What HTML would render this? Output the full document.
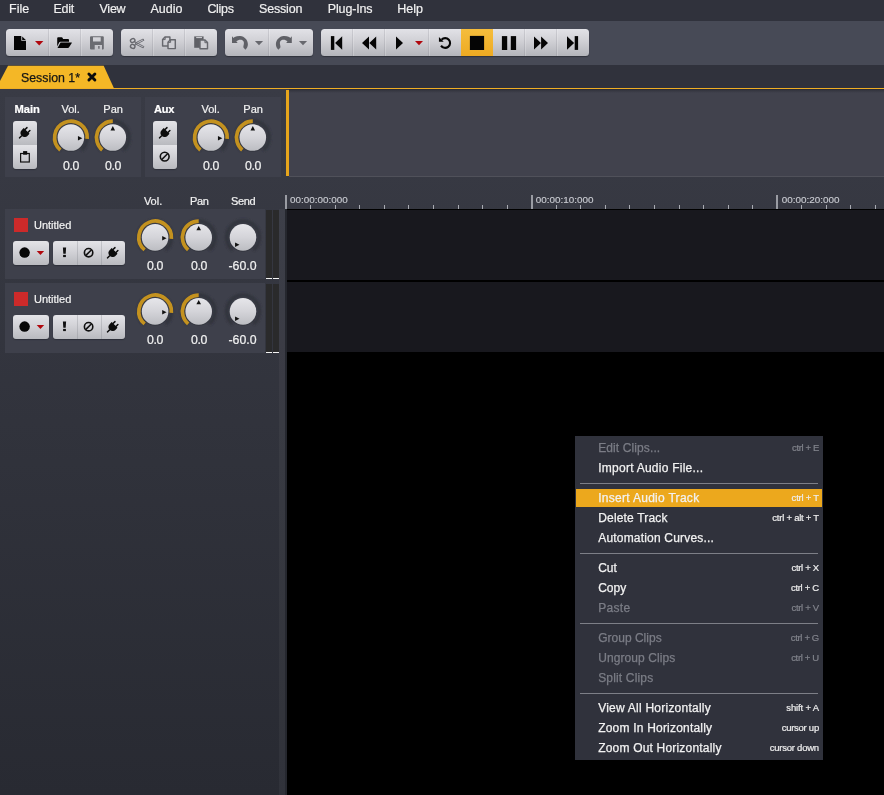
<!DOCTYPE html>
<html>
<head>
<meta charset="utf-8">
<title>Session 1</title>
<style>
*{margin:0;padding:0;box-sizing:border-box;}
html,body{width:884px;height:795px;overflow:hidden;background:#30323c;}
body{position:relative;font-family:"Liberation Sans",sans-serif;font-size:12.5px;color:#f0f0f0;-webkit-font-smoothing:antialiased;}
.abs{position:absolute;}
.t{position:absolute;white-space:nowrap;line-height:1;}
#menubar{left:0;top:0;width:884px;height:21px;background:#30323c;-webkit-text-stroke:0.2px;}
#toolbar{left:0;top:21px;width:884px;height:44px;background:#474a56;}
#tabstrip{left:0;top:65px;width:884px;height:24px;background:#30323c;}
#tabline{left:0;top:87.8px;width:884px;height:1.15px;background:#efae24;}
.grp{position:absolute;top:29.2px;height:27.3px;border-radius:3.5px;background:linear-gradient(#e2e2e7 0%,#d0d0d5 45%,#b4b5bb 100%);box-shadow:0 1px 1px rgba(30,32,40,.55);overflow:hidden;}
.grp .sep{position:absolute;top:0;width:1px;height:100%;background:rgba(120,122,130,.2);box-shadow:1px 0 0 rgba(255,255,255,.2);}
.grp svg{position:absolute;}
.on{position:absolute;top:0;height:100%;background:linear-gradient(#f5bd3c,#eeaa22);}
.sbtn{position:absolute;border-radius:3px;background:linear-gradient(#e4e4e8 0%,#d2d2d7 45%,#b9babf 100%);box-shadow:0 1px 1px rgba(30,32,40,.5);overflow:hidden;}
.sbtn .sep{position:absolute;background:rgba(120,122,130,.28);}
.sbtn svg{position:absolute;}
.panel{position:absolute;background:#3e404b;}
.knob{position:absolute;width:40px;height:40px;}
.lbl{color:#f2f2f2;-webkit-text-stroke:0.2px;}
/* context menu */
#ctx{left:575px;top:436px;width:248px;height:324px;background:#30323c;}
#ctx .it{position:absolute;left:1px;width:246px;height:18px;}
#ctx .it .n{position:absolute;left:22.2px;-webkit-text-stroke:0.25px;top:2.75px;font-size:12px;line-height:1;white-space:nowrap;color:#f2f2f2;}
#ctx .it .k{position:absolute;right:3.1px;-webkit-text-stroke:0.2px;top:4.1px;font-size:9.5px;line-height:1;white-space:nowrap;color:#eeeeee;}
#ctx .it.d .n{color:#7b7d86;}
#ctx .it.d .k{color:#82848c;}
#ctx .it.h{background:#eca81d;}
#ctx .sp{position:absolute;left:5px;width:238px;height:1px;background:#7d7f87;}
</style>
</head>
<body>
<div id="root" style="position:absolute;left:0;top:0;width:884px;height:795px;will-change:transform;">
<!-- menubar -->
<div id="menubar" class="abs">
  <span class="t" style="left:9px;top:2.5px;font-size:12.5px;">File</span>
  <span class="t" style="left:53.4px;top:2.5px;font-size:12.5px;letter-spacing:-0.25px;">Edit</span>
  <span class="t" style="left:99.5px;top:2.5px;font-size:12.5px;letter-spacing:-0.25px;">View</span>
  <span class="t" style="left:150.5px;top:2.5px;font-size:12.5px;">Audio</span>
  <span class="t" style="left:207.4px;top:2.5px;font-size:12.5px;letter-spacing:-0.3px;">Clips</span>
  <span class="t" style="left:259px;top:2.5px;font-size:12.5px;letter-spacing:-0.18px;">Session</span>
  <span class="t" style="left:327.8px;top:2.5px;font-size:12.5px;letter-spacing:-0.15px;">Plug-Ins</span>
  <span class="t" style="left:397.2px;top:2.5px;font-size:12.5px;">Help</span>
</div>
<div id="toolbar" class="abs"></div>
<div id="tabstrip" class="abs"></div>

<!-- toolbar groups -->
<div class="grp" style="left:5.5px;width:107.2px;" id="g1">
  <div class="sep" style="left:42.6px;"></div><div class="sep" style="left:74.6px;"></div>
</div>
<div class="grp" style="left:121.4px;width:95.3px;" id="g2">
  <div class="sep" style="left:30.7px;"></div><div class="sep" style="left:62.9px;"></div>
</div>
<div class="grp" style="left:225.4px;width:87.3px;" id="g3">
  <div class="sep" style="left:42.7px;"></div>
</div>
<div class="grp" style="left:321.4px;width:267.3px;" id="g4">
  <div class="on" style="left:139.6px;width:32px;"></div>
  <div class="sep" style="left:30.8px;"></div><div class="sep" style="left:62.6px;"></div><div class="sep" style="left:106.9px;"></div>
  <div class="sep" style="left:202.7px;"></div><div class="sep" style="left:234.7px;"></div>
</div>

<!-- tab -->
<svg class="abs" style="left:0;top:65px;" width="130" height="24" viewBox="0 0 130 24">
  <polygon points="-4.2,24 8,0.8 103.7,0.8 114.3,24" fill="#f4b726"/>
</svg>
<span class="t" style="left:21px;top:71.5px;font-size:12.35px;color:#151515;-webkit-text-stroke:0.25px;">Session 1*</span>
<div id="tabline" class="abs"></div>

<!-- left region bg -->
<div class="abs" style="left:0;top:89px;width:884px;height:706px;background:linear-gradient(rgb(57,59,69),rgb(40,42,50));"></div>
<!-- right upper area -->
<div class="abs" style="left:289px;top:90px;width:595px;height:86px;background:#41424d;"></div>
<div class="abs" style="left:289px;top:176px;width:595px;height:1px;background:#50515a;"></div>
<div class="abs" style="left:289px;top:89px;width:595px;height:3.5px;background:linear-gradient(rgba(30,32,40,.55),rgba(30,32,40,0));"></div>
<div class="abs" style="left:285.5px;top:89.5px;width:3.5px;height:86.5px;background:#e6a51c;"></div>

<!-- main / aux panels -->
<div class="panel" style="left:5px;top:97px;width:136px;height:80px;"></div>
<div class="panel" style="left:145px;top:97px;width:136px;height:80px;"></div>

<!-- track panels -->
<div class="panel" style="left:5px;top:209px;width:260px;height:70px;"></div>
<div class="panel" style="left:5px;top:283px;width:260px;height:70px;"></div>

<!-- timeline -->
<div class="abs" style="left:286px;top:209px;width:598px;height:586px;background:#000;"></div>
<div class="abs" style="left:287px;top:210px;width:597px;height:70px;background:#18181e;"></div>
<div class="abs" style="left:287px;top:282px;width:597px;height:70px;background:#18181e;"></div>
<div class="abs" style="left:279px;top:209px;width:6.4px;height:586px;background:rgba(255,255,255,.04);"></div>
<div class="abs" style="left:285.3px;top:209px;width:1.6px;height:586px;background:#25272e;"></div>


<!-- small button stacks -->
<div class="sbtn" style="left:13px;top:121px;width:24px;height:48px;background:linear-gradient(#e4e4e8 0%,#d2d2d7 22%,#b9babf 50%,#e4e4e8 50%,#d2d2d7 72%,#b9babf 100%);"></div>
<div class="sbtn" style="left:153px;top:121px;width:24px;height:48px;background:linear-gradient(#e4e4e8 0%,#d2d2d7 22%,#b9babf 50%,#e4e4e8 50%,#d2d2d7 72%,#b9babf 100%);"></div>
<!-- track buttons -->
<div class="sbtn" style="left:13px;top:241px;width:36px;height:24px;"></div>
<div class="sbtn" style="left:53px;top:241px;width:72px;height:24px;"><div class="sep" style="left:24px;top:0;width:1px;height:24px;"></div><div class="sep" style="left:48px;top:0;width:1px;height:24px;"></div></div>
<div class="sbtn" style="left:13px;top:315px;width:36px;height:24px;"></div>
<div class="sbtn" style="left:53px;top:315px;width:72px;height:24px;"><div class="sep" style="left:24px;top:0;width:1px;height:24px;"></div><div class="sep" style="left:48px;top:0;width:1px;height:24px;"></div></div>

<!-- labels main/aux -->
<span class="t lbl" style="left:14.4px;top:103.5px;font-size:11.2px;font-weight:bold;color:#fff;">Main</span>
<span class="t lbl" style="left:61.5px;top:104px;font-size:11px;">Vol.</span>
<span class="t lbl" style="left:103.3px;top:104px;font-size:11px;">Pan</span>
<span class="t lbl" style="left:62.9px;top:160px;font-size:12.3px;letter-spacing:-0.3px;">0.0</span>
<span class="t lbl" style="left:104.9px;top:160px;font-size:12.3px;letter-spacing:-0.3px;">0.0</span>
<span class="t lbl" style="left:154px;top:103.5px;font-size:11px;font-weight:bold;letter-spacing:-0.2px;color:#fff;">Aux</span>
<span class="t lbl" style="left:201.5px;top:104px;font-size:11px;">Vol.</span>
<span class="t lbl" style="left:243.3px;top:104px;font-size:11px;">Pan</span>
<span class="t lbl" style="left:202.9px;top:160px;font-size:12.3px;letter-spacing:-0.3px;">0.0</span>
<span class="t lbl" style="left:244.9px;top:160px;font-size:12.3px;letter-spacing:-0.3px;">0.0</span>

<!-- track column labels -->
<span class="t lbl" style="left:143.9px;top:196px;font-size:11px;">Vol.</span>
<span class="t lbl" style="left:190px;top:196px;font-size:11px;letter-spacing:-0.3px;">Pan</span>
<span class="t lbl" style="left:231px;top:196px;font-size:11px;letter-spacing:-0.35px;">Send</span>

<!-- track 1 -->
<span class="t lbl" style="left:34px;top:219.5px;font-size:11px;">Untitled</span>
<span class="t lbl" style="left:146.9px;top:260px;font-size:12.3px;letter-spacing:-0.3px;">0.0</span>
<span class="t lbl" style="left:190.9px;top:260px;font-size:12.3px;letter-spacing:-0.3px;">0.0</span>
<span class="t lbl" style="left:228.5px;top:260px;font-size:12.3px;">-60.0</span>
<!-- track 2 -->
<span class="t lbl" style="left:34px;top:293.5px;font-size:11px;">Untitled</span>
<span class="t lbl" style="left:146.9px;top:334px;font-size:12.3px;letter-spacing:-0.3px;">0.0</span>
<span class="t lbl" style="left:190.9px;top:334px;font-size:12.3px;letter-spacing:-0.3px;">0.0</span>
<span class="t lbl" style="left:228.5px;top:334px;font-size:12.3px;">-60.0</span>

<!-- meters -->
<div class="abs" style="left:266px;top:209.5px;width:6px;height:69.5px;background:#2a2a2b;"></div>
<div class="abs" style="left:273px;top:209.5px;width:6px;height:69.5px;background:#2a2a2b;"></div>
<div class="abs" style="left:266px;top:277.7px;width:6px;height:1.4px;background:#f4f4f4;"></div>
<div class="abs" style="left:273px;top:277.7px;width:6px;height:1.4px;background:#f4f4f4;"></div>
<div class="abs" style="left:266px;top:284px;width:6px;height:69px;background:#2a2a2b;"></div>
<div class="abs" style="left:273px;top:284px;width:6px;height:69px;background:#2a2a2b;"></div>
<div class="abs" style="left:266px;top:351.8px;width:6px;height:1.4px;background:#f4f4f4;"></div>
<div class="abs" style="left:273px;top:351.8px;width:6px;height:1.4px;background:#f4f4f4;"></div>

<!-- ruler -->
<div class="abs" style="left:310px;top:204.8px;width:1px;height:4.2px;background:#a9abb2;"></div>
<div class="abs" style="left:335px;top:204.8px;width:1px;height:4.2px;background:#a9abb2;"></div>
<div class="abs" style="left:359px;top:204.8px;width:1px;height:4.2px;background:#a9abb2;"></div>
<div class="abs" style="left:384px;top:204.8px;width:1px;height:4.2px;background:#a9abb2;"></div>
<div class="abs" style="left:408px;top:204.8px;width:1px;height:4.2px;background:#a9abb2;"></div>
<div class="abs" style="left:433px;top:204.8px;width:1px;height:4.2px;background:#a9abb2;"></div>
<div class="abs" style="left:458px;top:204.8px;width:1px;height:4.2px;background:#a9abb2;"></div>
<div class="abs" style="left:482px;top:204.8px;width:1px;height:4.2px;background:#a9abb2;"></div>
<div class="abs" style="left:507px;top:204.8px;width:1px;height:4.2px;background:#a9abb2;"></div>
<div class="abs" style="left:556px;top:204.8px;width:1px;height:4.2px;background:#a9abb2;"></div>
<div class="abs" style="left:580px;top:204.8px;width:1px;height:4.2px;background:#a9abb2;"></div>
<div class="abs" style="left:605px;top:204.8px;width:1px;height:4.2px;background:#a9abb2;"></div>
<div class="abs" style="left:629px;top:204.8px;width:1px;height:4.2px;background:#a9abb2;"></div>
<div class="abs" style="left:654px;top:204.8px;width:1px;height:4.2px;background:#a9abb2;"></div>
<div class="abs" style="left:679px;top:204.8px;width:1px;height:4.2px;background:#a9abb2;"></div>
<div class="abs" style="left:703px;top:204.8px;width:1px;height:4.2px;background:#a9abb2;"></div>
<div class="abs" style="left:728px;top:204.8px;width:1px;height:4.2px;background:#a9abb2;"></div>
<div class="abs" style="left:752px;top:204.8px;width:1px;height:4.2px;background:#a9abb2;"></div>
<div class="abs" style="left:801px;top:204.8px;width:1px;height:4.2px;background:#a9abb2;"></div>
<div class="abs" style="left:826px;top:204.8px;width:1px;height:4.2px;background:#a9abb2;"></div>
<div class="abs" style="left:850px;top:204.8px;width:1px;height:4.2px;background:#a9abb2;"></div>
<div class="abs" style="left:875px;top:204.8px;width:1px;height:4.2px;background:#a9abb2;"></div>
<div class="abs" style="left:285.4px;top:195px;width:1.8px;height:14px;background:#9a9ca3;"></div>
<div class="abs" style="left:530.9px;top:195px;width:1.8px;height:14px;background:#9a9ca3;"></div>
<div class="abs" style="left:776.4px;top:195px;width:1.8px;height:14px;background:#9a9ca3;"></div>
<span class="t" style="left:290px;top:195.4px;font-size:9.9px;color:#c8cad0;-webkit-text-stroke:0.15px;">00:00:00:000</span>
<span class="t" style="left:535.8px;top:195.4px;font-size:9.9px;color:#c8cad0;-webkit-text-stroke:0.15px;">00:00:10:000</span>
<span class="t" style="left:781.8px;top:195.4px;font-size:9.9px;color:#c8cad0;-webkit-text-stroke:0.15px;">00:00:20:000</span>

<svg class="abs" style="left:0;top:0;" width="884" height="795" viewBox="0 0 884 795">
<defs>
<linearGradient id="kg" x1="0" y1="0" x2="0" y2="1"><stop offset="0" stop-color="#e6e6ea"/><stop offset=".5" stop-color="#d4d4d9"/><stop offset="1" stop-color="#bcbdc2"/></linearGradient>
<filter id="bl" x="-20%" y="-20%" width="140%" height="140%"><feGaussianBlur stdDeviation="0.7"/></filter>
<filter id="bl2" x="-20%" y="-20%" width="140%" height="140%"><feGaussianBlur stdDeviation="0.8"/></filter>
<g id="plug" fill="#0c0c0c">
<rect x="-2.8" y="-7" width="1.5" height="4.2" rx=".7"/>
<rect x="1.3" y="-7" width="1.5" height="4.2" rx=".7"/>
<path d="M-4.1,-3.7 H4.1 V-1 C4.1,1.8 2.3,3.3 0,3.3 C-2.3,3.3 -4.1,1.8 -4.1,-1 Z"/>
<rect x="-.72" y="2.8" width="1.44" height="4.2" rx=".5"/>
</g>
</defs>
<path d="M14,36 H21.3 V40.8 H26 V50 H14 Z" fill="#050505"/>
<path d="M22.2,36.6 L25.8,40.1 H22.2 Z" fill="#050505"/>
<path d="M35,41.1 H43.4 L39.2,45.4 Z" fill="#b0080e"/>
<path d="M57.2,38.2 Q57.2,37.2 58.2,37.2 H61.6 Q62.4,37.2 62.7,38 L63,38.9 H68 Q69,38.9 69,39.9 V41.7 H60.3 Q59.6,41.7 59.3,42.3 L57.2,46.4 Z" fill="#050505"/>
<path d="M60.6,42.6 H71.6 Q72.1,42.6 71.8,43.1 L68.9,47.5 Q68.6,47.9 68,47.9 H57.5 Z" fill="#050505"/>
<path d="M91,36.2 H102.8 Q103.8,36.2 103.8,37.2 V48.6 Q103.8,49.6 102.8,49.6 H91 Q90,49.6 90,48.6 V37.2 Q90,36.2 91,36.2 Z M93,37.2 V41.5 H100.7 V37.2 Z M94.7,45 V49.6 H102 V45 Z M98.2,46 V48.8 H99.6 V46 Z" fill="#6b6c72" fill-rule="evenodd"/>
<ellipse cx="132.7" cy="40.5" rx="2.3" ry="1.9" fill="none" stroke="#67686e" stroke-width="1.4" transform="rotate(-25 132.7 40.5)"/>
<ellipse cx="132.7" cy="46.4" rx="2.3" ry="1.9" fill="none" stroke="#67686e" stroke-width="1.4" transform="rotate(25 132.7 46.4)"/>
<path d="M134.6,41.6 L143.9,46.6 L143.2,47.9 L136.5,44.6 Z" fill="none" stroke="#67686e" stroke-width="0.9" stroke-linejoin="round"/>
<path d="M134.6,45.3 L143.9,40.3 L143.2,39 L136.5,42.3 Z" fill="none" stroke="#67686e" stroke-width="0.9" stroke-linejoin="round"/>
<path d="M165,36.9 H169.9 V46 H162.6 V39.4 Z" fill="none" stroke="#67686e" stroke-width="1.45" stroke-linejoin="round"/>
<path d="M162.6,39.6 H165.2 V36.9" fill="none" stroke="#67686e" stroke-width="1"/>
<path d="M170.4,39.7 H175.3 V48.6 H168 V42.2 Z" fill="#cfcfd4" stroke="#67686e" stroke-width="1.45" stroke-linejoin="round"/>
<path d="M168,42.4 H170.6 V39.7" fill="none" stroke="#67686e" stroke-width="1"/>
<rect x="194.2" y="36.4" width="9.4" height="11.4" fill="#5f6066"/>
<rect x="196.2" y="37.1" width="5.8" height="1" fill="#d8d8dc"/>
<path d="M200,39.9 H205 L207.5,42.6 V48.8 H200 Z" fill="#cfcfd4" stroke="#67686e" stroke-width="1.45" stroke-linejoin="round"/>
<path d="M204.9,39.9 V42.7 H207.5" fill="none" stroke="#67686e" stroke-width="1"/>
<path d="M232,36.3 V42.9 H237.7 L236.3,41.4 C238,39.6 240.5,39.3 242,40 C243.6,40.9 244,42.2 243.9,43.5 C243.8,45 243.2,46.3 243.4,47.4 L245.4,49.7 C247,48.3 247.9,46.2 247.9,44.2 C247.9,40 244.5,36.4 240.2,36 C238.3,35.9 236.3,36.2 234.6,36.9 L233.5,38 Z" fill="#5f6066"/>
<path d="M232,36.3 V42.9 H237.7 L236.3,41.4 C238,39.6 240.5,39.3 242,40 C243.6,40.9 244,42.2 243.9,43.5 C243.8,45 243.2,46.3 243.4,47.4 L245.4,49.7 C247,48.3 247.9,46.2 247.9,44.2 C247.9,40 244.5,36.4 240.2,36 C238.3,35.9 236.3,36.2 234.6,36.9 L233.5,38 Z" fill="#5f6066" transform="translate(523.8,0) scale(-1,1)"/>
<path d="M254.9,41.1 H263.1 L259,45.2 Z" fill="#67686e"/>
<path d="M298.9,41.1 H307.1 L303,45.2 Z" fill="#67686e"/>
<rect x="330.9" y="36.1" width="3.4" height="13.8" fill="#050505"/><path d="M335.1,43 L342.2,36.3 V49.7 Z" fill="#050505"/>
<path d="M362,43 L369,36.6 V49.4 Z M369.3,43 L376.2,36.6 V49.4 Z" fill="#050505"/>
<path d="M396,36.5 L403,43 L396,49.5 Z" fill="#050505"/>
<path d="M415,41.1 H423 L419,45.3 Z" fill="#b0080e"/>
<path d="M441.56,39.72 A4.9,4.9 0 1 1 441.04,45.60" fill="none" stroke="#050505" stroke-width="2.1"/>
<path d="M438.95,37.1 V41.85 H443.7 Z" fill="#050505"/>
<rect x="469.9" y="35.9" width="14.2" height="14.1" fill="#050505"/>
<rect x="501.9" y="36.1" width="5.3" height="13.9" fill="#050505"/><rect x="510.8" y="36.1" width="5.3" height="13.9" fill="#050505"/>
<path d="M534,36.6 L541,43 L534,49.4 Z M541.1,36.6 L548,43 L541.1,49.4 Z" fill="#050505"/>
<path d="M567,36.3 L574.1,43 L567,49.7 Z" fill="#050505"/><rect x="574.7" y="36.1" width="3.4" height="13.8" fill="#050505"/>
<path d="M88.9,74 L94.9,80 M94.9,74 L88.9,80" stroke="#0c0c0c" stroke-width="2.9" stroke-linecap="round"/>
<use href="#plug" transform="translate(24.0,133.5) rotate(45)"/>
<use href="#plug" transform="translate(164.0,133.5) rotate(45)"/>
<rect x="20.6" y="153.5" width="8.7" height="8.5" fill="none" stroke="#111" stroke-width="1.2"/><rect x="23.1" y="151.1" width="4.1" height="3.6" fill="#0c0c0c"/>
<circle cx="164.7" cy="156.6" r="4.4" fill="none" stroke="#111" stroke-width="1.6"/><path d="M161.59,159.71 L167.81,153.49" stroke="#111" stroke-width="1.6"/>
<path d="M60.42,149.99 A16.3,16.3 0 1 1 81.38,149.99" fill="none" stroke="#32343d" stroke-width="3.8" filter="url(#bl2)"/>
<path d="M60.42,149.99 A16.3,16.3 0 1 1 87.14,138.92" fill="none" stroke="#c4921f" stroke-width="3.7"/>
<circle cx="70.9" cy="138.1" r="13.9" fill="#2e3039" opacity=".55" filter="url(#bl)"/>
<circle cx="70.9" cy="137.5" r="13.3" fill="url(#kg)"/>
<path d="M-2.2,-2.3 L2.2,0 L-2.2,2.3 Z" fill="#111" transform="translate(80.16,138.31) rotate(0)"/>
<path d="M102.32,149.99 A16.3,16.3 0 1 1 123.28,149.99" fill="none" stroke="#32343d" stroke-width="3.8" filter="url(#bl2)"/>
<path d="M102.32,149.99 A16.3,16.3 0 0 1 112.80,121.20" fill="none" stroke="#c4921f" stroke-width="3.7"/>
<circle cx="112.8" cy="138.1" r="13.9" fill="#2e3039" opacity=".55" filter="url(#bl)"/>
<circle cx="112.8" cy="137.5" r="13.3" fill="url(#kg)"/>
<path d="M-2.2,-2.3 L2.2,0 L-2.2,2.3 Z" fill="#111" transform="translate(112.80,128.20) rotate(-90)"/>
<path d="M200.42,149.99 A16.3,16.3 0 1 1 221.38,149.99" fill="none" stroke="#32343d" stroke-width="3.8" filter="url(#bl2)"/>
<path d="M200.42,149.99 A16.3,16.3 0 1 1 227.14,138.92" fill="none" stroke="#c4921f" stroke-width="3.7"/>
<circle cx="210.9" cy="138.1" r="13.9" fill="#2e3039" opacity=".55" filter="url(#bl)"/>
<circle cx="210.9" cy="137.5" r="13.3" fill="url(#kg)"/>
<path d="M-2.2,-2.3 L2.2,0 L-2.2,2.3 Z" fill="#111" transform="translate(220.16,138.31) rotate(0)"/>
<path d="M242.32,149.99 A16.3,16.3 0 1 1 263.28,149.99" fill="none" stroke="#32343d" stroke-width="3.8" filter="url(#bl2)"/>
<path d="M242.32,149.99 A16.3,16.3 0 0 1 252.80,121.20" fill="none" stroke="#c4921f" stroke-width="3.7"/>
<circle cx="252.8" cy="138.1" r="13.9" fill="#2e3039" opacity=".55" filter="url(#bl)"/>
<circle cx="252.8" cy="137.5" r="13.3" fill="url(#kg)"/>
<path d="M-2.2,-2.3 L2.2,0 L-2.2,2.3 Z" fill="#111" transform="translate(252.80,128.20) rotate(-90)"/>
<rect x="14" y="218" width="14" height="14" fill="#cc2a2a"/>
<circle cx="24.6" cy="252.6" r="5.25" fill="#080808"/>
<path d="M36.7,250.9 H44.2 L40.45,255 Z" fill="#b0080e"/>
<path d="M62.9,247.6 H66.1 L65.7,253.8 H63.3 Z" fill="#111"/><rect x="63.1" y="254.9" width="2.8" height="2.2" fill="#111"/>
<circle cx="88.6" cy="252.7" r="4.2" fill="none" stroke="#111" stroke-width="1.6"/><path d="M85.63,255.67 L91.57,249.73" stroke="#111" stroke-width="1.6"/>
<use href="#plug" transform="translate(112.0,253.5) rotate(45)"/>
<path d="M144.62,249.89 A16.3,16.3 0 1 1 165.58,249.89" fill="none" stroke="#32343d" stroke-width="3.8" filter="url(#bl2)"/>
<path d="M144.62,249.89 A16.3,16.3 0 1 1 171.34,238.82" fill="none" stroke="#c4921f" stroke-width="3.7"/>
<circle cx="155.1" cy="238.0" r="13.9" fill="#2e3039" opacity=".55" filter="url(#bl)"/>
<circle cx="155.1" cy="237.4" r="13.3" fill="url(#kg)"/>
<path d="M-2.2,-2.3 L2.2,0 L-2.2,2.3 Z" fill="#111" transform="translate(164.36,238.21) rotate(0)"/>
<path d="M188.22,249.89 A16.3,16.3 0 1 1 209.18,249.89" fill="none" stroke="#32343d" stroke-width="3.8" filter="url(#bl2)"/>
<path d="M188.22,249.89 A16.3,16.3 0 0 1 198.70,221.10" fill="none" stroke="#c4921f" stroke-width="3.7"/>
<circle cx="198.7" cy="238.0" r="13.9" fill="#2e3039" opacity=".55" filter="url(#bl)"/>
<circle cx="198.7" cy="237.4" r="13.3" fill="url(#kg)"/>
<path d="M-2.2,-2.3 L2.2,0 L-2.2,2.3 Z" fill="#111" transform="translate(198.70,228.10) rotate(-90)"/>
<path d="M232.52,249.89 A16.3,16.3 0 1 1 253.48,249.89" fill="none" stroke="#32343d" stroke-width="3.8" filter="url(#bl2)"/>
<circle cx="243" cy="238.0" r="13.9" fill="#2e3039" opacity=".55" filter="url(#bl)"/>
<circle cx="243" cy="237.4" r="13.3" fill="url(#kg)"/>
<path d="M-2.2,-2.3 L2.2,0 L-2.2,2.3 Z" fill="#111" transform="translate(237.27,244.73) rotate(0)"/>
<rect x="14" y="292" width="14" height="14" fill="#cc2a2a"/>
<circle cx="24.6" cy="326.6" r="5.25" fill="#080808"/>
<path d="M36.7,324.9 H44.2 L40.45,329 Z" fill="#b0080e"/>
<path d="M62.9,321.6 H66.1 L65.7,327.8 H63.3 Z" fill="#111"/><rect x="63.1" y="328.9" width="2.8" height="2.2" fill="#111"/>
<circle cx="88.6" cy="326.7" r="4.2" fill="none" stroke="#111" stroke-width="1.6"/><path d="M85.63,329.67 L91.57,323.73" stroke="#111" stroke-width="1.6"/>
<use href="#plug" transform="translate(112.0,327.5) rotate(45)"/>
<path d="M144.62,323.89 A16.3,16.3 0 1 1 165.58,323.89" fill="none" stroke="#32343d" stroke-width="3.8" filter="url(#bl2)"/>
<path d="M144.62,323.89 A16.3,16.3 0 1 1 171.34,312.82" fill="none" stroke="#c4921f" stroke-width="3.7"/>
<circle cx="155.1" cy="312.0" r="13.9" fill="#2e3039" opacity=".55" filter="url(#bl)"/>
<circle cx="155.1" cy="311.4" r="13.3" fill="url(#kg)"/>
<path d="M-2.2,-2.3 L2.2,0 L-2.2,2.3 Z" fill="#111" transform="translate(164.36,312.21) rotate(0)"/>
<path d="M188.22,323.89 A16.3,16.3 0 1 1 209.18,323.89" fill="none" stroke="#32343d" stroke-width="3.8" filter="url(#bl2)"/>
<path d="M188.22,323.89 A16.3,16.3 0 0 1 198.70,295.10" fill="none" stroke="#c4921f" stroke-width="3.7"/>
<circle cx="198.7" cy="312.0" r="13.9" fill="#2e3039" opacity=".55" filter="url(#bl)"/>
<circle cx="198.7" cy="311.4" r="13.3" fill="url(#kg)"/>
<path d="M-2.2,-2.3 L2.2,0 L-2.2,2.3 Z" fill="#111" transform="translate(198.70,302.10) rotate(-90)"/>
<path d="M232.52,323.89 A16.3,16.3 0 1 1 253.48,323.89" fill="none" stroke="#32343d" stroke-width="3.8" filter="url(#bl2)"/>
<circle cx="243" cy="312.0" r="13.9" fill="#2e3039" opacity=".55" filter="url(#bl)"/>
<circle cx="243" cy="311.4" r="13.3" fill="url(#kg)"/>
<path d="M-2.2,-2.3 L2.2,0 L-2.2,2.3 Z" fill="#111" transform="translate(237.27,318.73) rotate(0)"/>
</svg>
<!-- context menu -->
<div id="ctx" class="abs">
  <div class="it d" style="top:3px;"><span class="n" style="letter-spacing:0.107px;">Edit Clips...</span><span class="k" style="letter-spacing:-0.371px;">ctrl + E</span></div>
  <div class="it" style="top:23px;"><span class="n" style="letter-spacing:0.253px;">Import Audio File...</span></div>
  <div class="sp" style="top:47px;"></div>
  <div class="it h" style="top:53px;"><span class="n" style="letter-spacing:0.288px;">Insert Audio Track</span><span class="k" style="letter-spacing:-0.229px;">ctrl + T</span></div>
  <div class="it" style="top:73px;"><span class="n" style="letter-spacing:0.176px;">Delete Track</span><span class="k" style="letter-spacing:-0.246px;">ctrl + alt + T</span></div>
  <div class="it" style="top:93px;"><span class="n" style="letter-spacing:0.195px;">Automation Curves...</span></div>
  <div class="sp" style="top:117px;"></div>
  <div class="it" style="top:123px;"><span class="n" style="letter-spacing:0px;">Cut</span><span class="k" style="letter-spacing:-0.3px;">ctrl + X</span></div>
  <div class="it" style="top:143px;"><span class="n" style="letter-spacing:0px;">Copy</span><span class="k" style="letter-spacing:-0.3px;">ctrl + C</span></div>
  <div class="it d" style="top:163px;"><span class="n" style="letter-spacing:0.297px;">Paste</span><span class="k" style="letter-spacing:-0.3px;">ctrl + V</span></div>
  <div class="sp" style="top:187px;"></div>
  <div class="it d" style="top:193px;"><span class="n" style="letter-spacing:0.01px;">Group Clips</span><span class="k" style="letter-spacing:-0.355px;">ctrl + G</span></div>
  <div class="it d" style="top:213px;"><span class="n" style="letter-spacing:0.093px;">Ungroup Clips</span><span class="k" style="letter-spacing:-0.329px;">ctrl + U</span></div>
  <div class="it d" style="top:233px;"><span class="n" style="letter-spacing:0.159px;">Split Clips</span></div>
  <div class="sp" style="top:257px;"></div>
  <div class="it" style="top:263px;"><span class="n" style="letter-spacing:0.235px;">View All Horizontally</span><span class="k" style="letter-spacing:-0.162px;">shift + A</span></div>
  <div class="it" style="top:283px;"><span class="n" style="letter-spacing:0.2px;">Zoom In Horizontally</span><span class="k" style="letter-spacing:-0.262px;">cursor up</span></div>
  <div class="it" style="top:303px;"><span class="n" style="letter-spacing:0.191px;">Zoom Out Horizontally</span><span class="k" style="letter-spacing:-0.227px;">cursor down</span></div>
</div>
</div>
</body>
</html>
